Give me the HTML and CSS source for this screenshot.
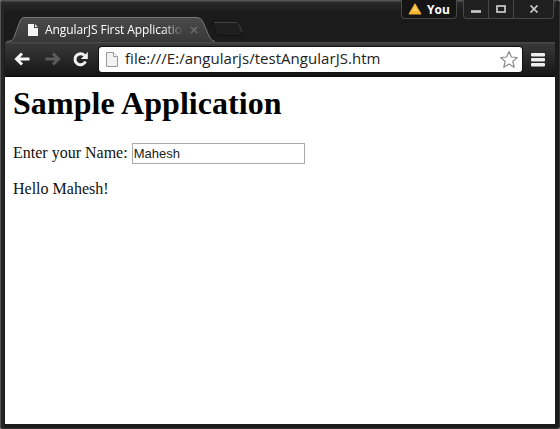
FILE: index.html
```html
<!DOCTYPE html>
<html lang="en">
<head>
<meta charset="utf-8">
<title>AngularJS First Application</title>
<link rel="stylesheet" href="styles.css">
</head>
<body>
<div class="window">
  <header class="titlebar">
    <div class="tab">
      <svg class="tab-shape" width="210" height="25" viewBox="0 0 210 25">
        <defs><linearGradient id="g" x1="0" y1="0" x2="0" y2="1"><stop offset="0" stop-color="#4a4a4a"/><stop offset="1" stop-color="#383838"/></linearGradient></defs>
        <path d="M0 24.500C5 24 6 23 7.500 19L13 4Q14.500 .5 17 .5H190Q194 .5 196 5L202 19Q204 24 208 24.500V25H0Z" fill="url(#g)"/>
        <path d="M0 24.500C5 24 6 23 7.500 19L13 4Q14.500 .5 17 .5H190Q194 .5 196 5L202 19Q204 24 208 24.500" fill="none" stroke="#777"/>
      </svg>
      <svg class="tab-page" width="12" height="14" viewBox="0 0 12 14"><path d="M1 1H7V5H11V13H1Z" fill="#f4f4f4"/><path d="M8 1L11 4H8Z" fill="#ddd"/></svg>
      <span class="tab-title">AngularJS First Application</span>
      <svg class="tab-close" width="8" height="8" viewBox="0 0 8 8"><path d="M1 1L7 7M7 1L1 7" stroke="#6b6b6b" stroke-width="1.600"/></svg>
    </div>
    <svg class="new-tab" width="32" height="15" viewBox="0 0 32 15"><path d="M2 .5H23Q26 .5 27 3L30 10Q31 13.500 28 13.500H8Q5 13.500 4 11L1 3Q0 .5 2 .5Z" fill="#1f1f1f" stroke="#111"/><path d="M2 .5H23Q26 .5 27 3L30 10" fill="none" stroke="#444"/></svg>
    <div class="profile">
      <svg width="14" height="12" viewBox="0 0 14 12"><path d="M7 .8L13 11H1Z" fill="#f8b931" stroke="#f3ad30" stroke-linejoin="round"/><path d="M7 3L10 8H4Z" fill="#ffd165"/></svg>
      <span>You</span>
    </div>
    <div class="controls">
      <span class="control minimize"><svg width="12" height="10" viewBox="0 0 12 10"><path d="M1 7.500H11" stroke="#ccc" stroke-width="2.600"/></svg></span>
      <span class="control maximize"><svg width="10" height="8" viewBox="0 0 10 8"><rect x="1" y="1" width="8" height="6" fill="none" stroke="#ccc" stroke-width="1.700"/></svg></span>
      <span class="control close"><svg width="10" height="8" viewBox="0 0 10 8"><path d="M1.500 .5L8.500 7.500M8.500 .5L1.500 7.500" stroke="#ccc" stroke-width="1.700"/></svg></span>
    </div>
  </header>
  <nav class="toolbar">
    <svg class="back" width="17" height="14" viewBox="0 0 17 14"><path d="M15.500 7H2.500M8 1.500L2.500 7L8 12.500" fill="none" stroke="#f5f5f5" stroke-width="3"/></svg>
    <svg class="forward" width="17" height="14" viewBox="0 0 17 14"><path d="M1.500 7H14.500M9 1.500L14.500 7L9 12.500" fill="none" stroke="#5c5c5c" stroke-width="3"/></svg>
    <svg class="reload" width="17" height="17" viewBox="0 0 17 17"><path d="M12.500 4.500A5.500 5.500 0 1 0 13.500 10.500" fill="none" stroke="#f2f2f2" stroke-width="3"/><path d="M15.800 1V8H8.800Z" fill="#f2f2f2"/></svg>
    <div class="address">
      <svg class="page-icon" width="12" height="15" viewBox="0 0 12 15"><path d="M.5 .5H7.500L11.500 4.500V14.500H.5Z" fill="#f2f2f2" stroke="#999"/><path d="M7.500 .5V4.500H11.500" fill="#fff" stroke="#999"/></svg>
      <span class="url">file:///E:/angularjs/testAngularJS.htm</span>
      <svg class="star" width="20" height="19" viewBox="0 0 20 19"><path d="M10 1.500L12.400 7L18.300 7.500L13.800 11.400L15.200 17.200L10 14.100L4.800 17.200L6.200 11.400L1.700 7.500L7.600 7Z" fill="#fff" stroke="#888" stroke-width="1.200" stroke-linejoin="round"/></svg>
    </div>
    <svg class="menu" width="14" height="15" viewBox="0 0 14 15"><g fill="#eee"><rect y="1" width="14" height="3.500" rx="1"/><rect y="6" width="14" height="3.500" rx="1"/><rect y="11" width="14" height="3.500" rx="1"/></g></svg>
  </nav>
  <main class="page">
    <h1>Sample Application</h1>
    <p class="name-row"><label for="name">Enter your Name:</label><input id="name" type="text" value="Mahesh"></p>
    <p class="greeting">Hello Mahesh!</p>
  </main>
</div>
</body>
</html>
```
FILE: styles.css
```css
* { box-sizing: border-box; }
body { margin: 0; background: #888; overflow: hidden; }
.window {
  display: flex;
  flex-direction: column;
  width: 560px;
  height: 429px;
  padding: 0 5px 5px;
  background: #1b1b1b;
  border-radius: 4px;
  box-shadow: inset 1px 1px #555, inset -1px -1px #333, inset 4px 0 #262626;
}
.titlebar {
  display: flex;
  flex: 0 0 41px;
  align-items: flex-start;
  margin: 0 -1px;
  padding-left: 3px;
  background: linear-gradient(#555 0 1px, #2a2a2a 2px, #1b1b1b 12px, #1b1b1b);
}
.tab {
  position: relative;
  display: flex;
  align-items: center;
  width: 210px;
  height: 25px;
  margin-top: 17px;
  padding-left: 20px;
}
.tab-shape { position: absolute; left: 0; top: 0; }
.tab-page { position: relative; flex: none; }
.tab-title {
  position: relative;
  width: 138px;
  margin-left: 6px;
  overflow: hidden;
  white-space: nowrap;
  font: 12px/17px "Open Sans", sans-serif;
  letter-spacing: -0.08px;
  color: #fff;
  mask-image: linear-gradient(90deg, #000 118px, transparent 139px);
}
.tab-close { position: relative; flex: none; margin-left: 7px; }
.new-tab { flex: none; margin: 22px 0 0 -5px; }
.profile {
  display: flex;
  align-items: center;
  width: 56px;
  height: 19px;
  margin-left: auto;
  padding-left: 6px;
  gap: 5px;
  border: 1px solid #484848;
  border-top: 0;
  border-radius: 0 0 4px 4px;
  background: #151515;
  font: bold 12px "Open Sans", sans-serif;
  color: #fff;
}
.controls {
  display: flex;
  width: 91px;
  height: 19px;
  margin: 0 2px 0 6px;
  border: 1px solid #484848;
  border-top: 0;
  border-radius: 0 0 4px 4px;
  background: #202020;
}
.control { display: flex; align-items: center; justify-content: center; width: 25px; border-right: 1px solid #484848; }
.close { flex: 1; border-right: 0; }
.toolbar {
  display: flex;
  flex: 0 0 35px;
  align-items: center;
  padding: 0 9px 1px 9px;
  background: linear-gradient(#484848 0 1px, #383838 2px, #171717 33px, #080808);
}
.toolbar > svg { flex: none; }
.forward { margin-left: 13px; }
.reload { margin-left: 11px; }
.address {
  display: flex;
  align-items: center;
  width: 423px;
  height: 25px;
  margin-left: 10px;
  padding: 0 3px 0 7px;
  border-radius: 3px;
  background: #fff;
  box-shadow: 0 0 0 1px #111;
}
.url {
  flex: 1;
  margin-left: 7px;
  padding-bottom: 1px;
  font: 15px/21px "Open Sans", sans-serif;
  letter-spacing: 0.04px;
  white-space: nowrap;
  color: #222;
}
.menu { margin-left: 9px; }
.page { flex: 1; padding: 8px; background: #fff; font: 16px "Liberation Serif", serif; color: #111; }
h1 { margin: 0; font-size: 32px; line-height: 37px; letter-spacing: 0.06px; color: #000; }
.name-row { display: flex; align-items: center; height: 22px; margin: 20px 0 0; }
#name {
  width: 173px;
  height: 21px;
  margin: 0 0 0 4px;
  padding: 1px;
  border: 1px solid #aaa;
  border-radius: 0;
  font: 13px "Liberation Sans", sans-serif;
  color: #222;
}
.greeting { margin: 16px 0 0; line-height: 18px; }
```
